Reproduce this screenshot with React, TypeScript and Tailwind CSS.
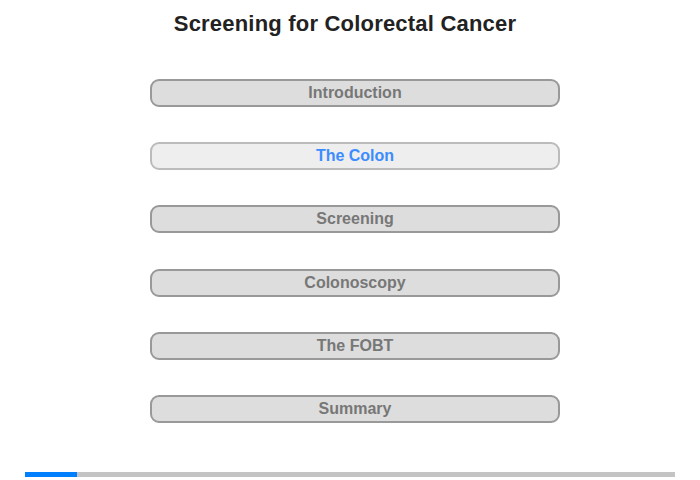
import React from "react";

const items = ["Introduction", "The Colon", "Screening", "Colonoscopy", "The FOBT", "Summary"];

export default function App() {
  return (
    <div className="w-[700px] h-[480px] bg-white flex flex-col" style={{ fontFamily: '"Liberation Sans", Arial, sans-serif' }}>
      <h1 className="mt-[11px] pr-[10px] h-[26px] leading-[26px] text-center text-[22px] font-bold tracking-[0.2px] text-[#222222]">
        Screening for Colorectal Cancer
      </h1>
      <div className="mt-[42px] ml-[150px] flex flex-col gap-[35.2px]">
        {items.map((t, i) => (
          <div
            key={t}
            className={
              i === 1
                ? "w-[410px] h-[28px] rounded-[9px] border-2 border-[#bbbbbb] bg-[#eeeeee] flex items-center justify-center text-[16px] font-bold text-[#3b8cff]"
                : "w-[410px] h-[28px] rounded-[9px] border-2 border-[#999999] bg-[#dddddd] flex items-center justify-center text-[16px] font-bold text-[#777777]"
            }
          >
            {t}
          </div>
        ))}
      </div>
      <div className="mt-auto mb-[3px] ml-[25px] w-[650px] h-[5px] bg-[#c4c4c4] flex">
        <div className="w-[52px] h-full bg-[#0080ff]" />
      </div>
    </div>
  );
}
